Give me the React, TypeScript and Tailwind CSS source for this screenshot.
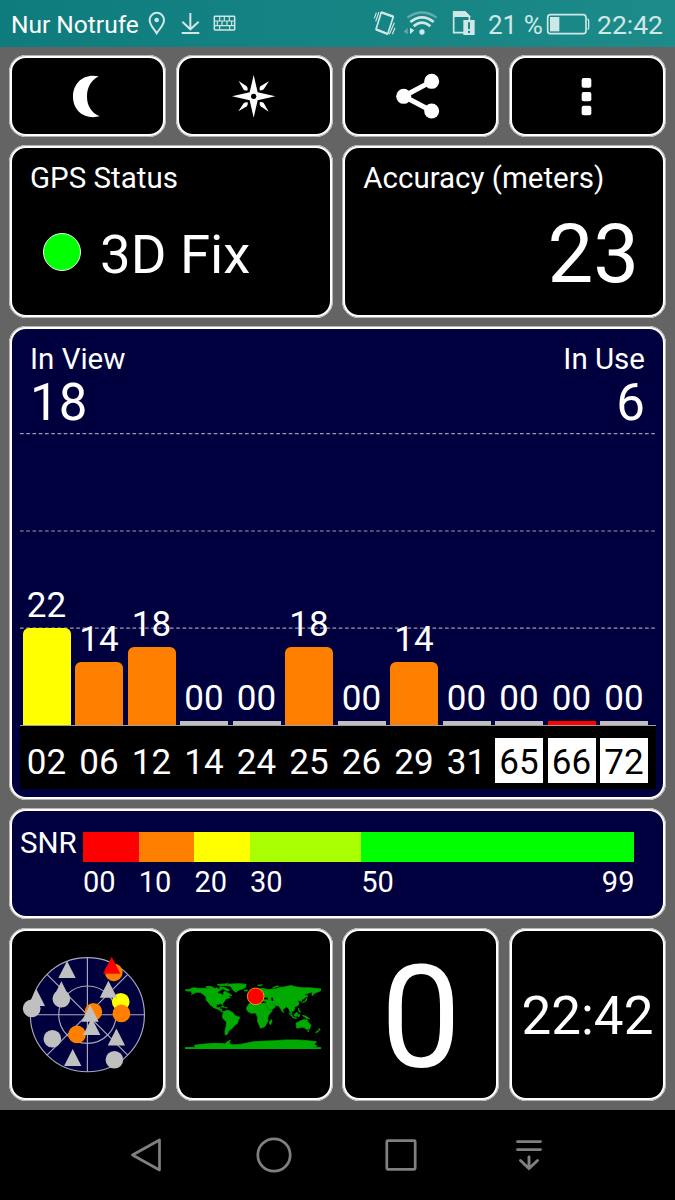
import React from 'react';

interface Satellite {
  id: string;
  snr: string;
  height: number;
  color: string;
  glonass?: boolean;
}

const satellites: Satellite[] = [
  { id: '02', snr: '22', height: 97, color: 'bg-[#ffff00]' },
  { id: '06', snr: '14', height: 63, color: 'bg-[#ff8000]' },
  { id: '12', snr: '18', height: 78, color: 'bg-[#ff8000]' },
  { id: '14', snr: '00', height: 4, color: 'bg-[#c0c0c0]' },
  { id: '24', snr: '00', height: 4, color: 'bg-[#c0c0c0]' },
  { id: '25', snr: '18', height: 78, color: 'bg-[#ff8000]' },
  { id: '26', snr: '00', height: 4, color: 'bg-[#c0c0c0]' },
  { id: '29', snr: '14', height: 63, color: 'bg-[#ff8000]' },
  { id: '31', snr: '00', height: 4, color: 'bg-[#c0c0c0]' },
  { id: '65', snr: '00', height: 4, color: 'bg-[#c0c0c0]', glonass: true },
  { id: '66', snr: '00', height: 4, color: 'bg-[#ff0000]', glonass: true },
  { id: '72', snr: '00', height: 4, color: 'bg-[#c0c0c0]', glonass: true },
];

const snrScale = [
  { from: '00', span: 'w-[55.7px]', color: 'bg-[#ff0000]' },
  { from: '10', span: 'w-[55.7px]', color: 'bg-[#ff8000]' },
  { from: '20', span: 'w-[55.7px]', color: 'bg-[#ffff00]' },
  { from: '30', span: 'w-[111.2px]', color: 'bg-[#aaff00]' },
  { from: '50', span: 'w-[273.2px]', color: 'bg-[#00ff00]' },
];

// GPS satellites are circles, GLONASS ones are triangles
const skyCircles: [number, number, string][] = [
  [169, 221, '#c0c0c0'],
  [142, 341, '#c0c0c0'],
  [328, 404, '#c0c0c0'],
  [326, 142, '#ff8000'],
  [347, 230, '#ffff00'],
  [349, 265, '#ff8000'],
  [265, 260, '#ff8000'],
  [216, 328, '#ff8000'],
];

const skyTriangles: [number, number, string][] = [
  [186, 108, '#c0c0c0'],
  [320, 95, '#ff0000'],
  [94, 192, '#c0c0c0'],
  [169, 169, '#c0c0c0'],
  [310, 167, '#c0c0c0'],
  [260, 279, '#c0c0c0'],
  [255, 239, '#c0c0c0'],
  [334, 310, '#c0c0c0'],
  [203, 372, '#c0c0c0'],
];

// Coastlines as longitude / negative latitude
const land = [
  '-180,-66 -168,-68 -162,-71 -156,-72 -140,-70 -128,-71 -115,-69 -105,-69 -95,-72 -93,-69 -84,-68 -81,-69 -87,-65 -94,-61 -92,-57 -82,-55 -80,-51 -78,-55 -77,-62 -71,-61 -66,-58 -60,-55 -56,-52 -66,-50 -60,-46 -70,-43 -74,-40 -76,-35 -81,-31 -80,-25 -84,-30 -90,-29 -97,-27 -97,-20 -91,-19 -87,-21 -88,-16 -83,-15 -83,-10 -77,-8 -83,-8 -88,-13 -95,-16 -105,-20 -109,-26 -114,-31 -110,-23 -117,-32 -124,-40 -124,-48 -132,-55 -140,-60 -150,-60 -164,-54 -158,-58 -165,-61 -162,-65 -172,-63',
  '-77,-8 -72,-12 -62,-11 -51,-4 -50,0 -44,3 -35,6 -39,14 -41,22 -48,27 -54,34 -58,38 -65,42 -66,47 -69,52 -74,52 -74,42 -71,30 -70,18 -77,12 -81,5 -80,-1',
  '-73,-78 -60,-82 -35,-83 -18,-81 -20,-73 -28,-69 -40,-65 -44,-60 -52,-65 -55,-70 -60,-76',
  '-125,-75 -115,-76 -105,-73 -102,-69 -118,-70',
  '-95,-81 -65,-83 -75,-78 -88,-77',
  '-88,-74 -75,-73 -62,-66 -68,-63 -78,-69 -88,-70',
  '-24,-66 -14,-66 -16,-63 -22,-64',
  '-9,-43 -2,-44 -4,-48 2,-51 8,-54 8,-57 12,-54 20,-55 28,-60 22,-63 25,-66 18,-61 12,-56 5,-60 12,-67 25,-71 40,-67 45,-68 60,-69 70,-73 82,-74 100,-78 115,-74 130,-72 150,-72 170,-70 180,-69 180,-65 172,-61 163,-58 157,-51 156,-58 162,-62 150,-59 136,-55 141,-49 135,-43 129,-41 129,-35 125,-38 118,-39 121,-32 120,-26 110,-21 109,-12 105,-9 100,-14 104,-2 98,-9 94,-18 88,-22 80,-15 78,-8 73,-17 68,-24 58,-26 48,-30 57,-25 59,-21 52,-16 44,-13 39,-21 34,-29 36,-36 27,-37 30,-41 23,-37 19,-42 13,-45 18,-40 12,-42 3,-42 -1,-37 -9,-37',
  '-6,-35 10,-37 20,-31 33,-31 37,-21 43,-12 51,-12 41,1 39,7 40,16 35,24 31,31 20,35 17,28 12,17 13,7 9,-1 8,-5 -5,-5 -12,-8 -17,-15 -16,-22 -10,-30',
  '44,17 49,12 50,16 47,25 44,24',
  '-5,-50 1,-51 -2,-56 -5,-58 -4,-54',
  '-10,-52 -6,-53 -7,-55 -10,-54',
  '114,22 122,17 129,14 137,12 136,16 142,11 146,19 153,27 150,37 142,38 136,34 130,32 116,35',
  '145,41 148,41 147,44 145,43',
  '174,36 178,38 175,41',
  '172,41 174,42 169,47 166,46',
  '95,-6 105,2 106,6 100,1',
  '105,6 115,8 115,9 105,7',
  '109,-2 117,-7 118,-2 115,4 110,2',
  '119,-1 124,-1 121,5 119,4',
  '131,1 141,3 150,10 142,9 135,4',
  '121,-18 122,-13 126,-7 123,-8 120,-14',
  '131,-33 136,-35 141,-38 142,-45 139,-38',
  '142,-54 143,-46 144,-50',
  '52,-71 60,-76 68,-77 58,-73',
  '12,-79 25,-80 18,-77',
  '80,-7 82,-7 81,-9',
  '-85,-22 -75,-20 -77,-22',
  '-73,-20 -68,-19 -72,-18',
  '-180,86 -153,86 -155,80 -130,77 -100,75 -75,76 -66,70 -60,66 -63,75 -55,79 -35,78 -15,74 0,71 30,69 60,68 85,66 120,66 145,68 168,71 162,78 170,82 158,86 180,86 180,90 -180,90',
];

interface PanelProps {
  className?: string;
  children: React.ReactNode;
}

const Panel: React.FC<PanelProps> = ({ className = '', children }) => (
  <div className={`rounded-[17px] border-[3px] border-white outline-1 -outline-offset-1 outline-[#b4b4b4] ${className}`}>
    {children}
  </div>
);

const StatusBar = () => (
  <div className="flex h-[47px] items-start bg-gradient-to-r from-[#0e7b7d] to-[#1d8b8a] pl-[11px] text-[#cfe7e6]">
    <span className="mt-[13px] w-[137px] whitespace-nowrap text-[24.500px] leading-none text-white">Nur Notrufe</span>
    <svg className="mt-[11px] h-6 w-[18px]" viewBox="444 33 54 72" fill="none" stroke="currentColor" strokeWidth="6">
      <path d="M470 100 C461 85 449 76 449 60 A21.500 21.500 0 0 1 492 60 C492 76 479 85 470 100Z" />
      <circle cx="470" cy="60" r="7" fill="currentColor" stroke="none" />
    </svg>
    <svg className="mt-[11px] ml-[15px] h-6 w-5" viewBox="543 33 60 72" fill="none" stroke="currentColor" strokeWidth="6">
      <path d="M571 39V88M547 65L571 88L596 65M545 99H598" />
    </svg>
    <svg className="mt-[11px] ml-[12px] h-6 w-[23px]" viewBox="639 33 69 72" fill="none" stroke="currentColor" strokeWidth="4.500">
      <rect x="643" y="49" width="61" height="41" rx="2" />
      <path d="M643 63H704M643 77H704M659 49V63M673 49V63M688 49V63M652 63V77M666 63V77M681 63V77M695 63V77M659 77V90M689 77V90" strokeWidth="3.500" />
    </svg>

    <svg className="mt-[10px] ml-[137px] h-[26px] w-[23px]" viewBox="114 30 69 78" fill="none" stroke="currentColor">
      <path d="M139 37L175 50L158 102L123 88Z" strokeWidth="5" strokeLinejoin="round" />
      <path d="M139 37L175 50M123 88L158 102" strokeWidth="7" />
      <path d="M118 55L124 38M122 64L132 36M163 103L178 68M172 103L180 83" strokeWidth="3.500" />
    </svg>
    <svg className="mt-[10px] ml-[7px] h-[26px] w-[35px]" viewBox="204 30 105 78" fill="none" stroke="currentColor">
      <path d="M217 53Q261 22 305 53" strokeWidth="7" opacity=".4" />
      <path d="M226 66Q261 38 296 66" strokeWidth="8" />
      <path d="M236 79Q261 57 286 79" strokeWidth="8" />
      <circle cx="261" cy="96" r="8" fill="currentColor" stroke="none" />
      <path d="M206 95L218 83V103Z" fill="currentColor" stroke="none" opacity=".4" />
      <path d="M225 83V103L238 91Z" fill="currentColor" stroke="none" />
    </svg>
    <svg className="mt-[10px] ml-[14px] h-[26px] w-[23px]" viewBox="351 30 69 78" fill="none" stroke="currentColor">
      <path d="M388 98H356V36H390L403 49V61" strokeWidth="5" />
      <path d="M356 36H390L403 49H356Z" fill="currentColor" strokeWidth="4" />
      <rect x="385" y="60" width="34" height="45" fill="currentColor" stroke="none" />
      <path d="M402 67V87M402 92V99" stroke="#198887" strokeWidth="6" />
    </svg>
    <span className="mt-[12px] ml-[13px] w-[58px] whitespace-nowrap text-[26px] leading-none">21 %</span>
    <svg className="mt-[12px] h-6 w-11" viewBox="633 36 132 72" fill="none" stroke="currentColor">
      <rect x="638" y="44" width="115" height="57" rx="9" strokeWidth="5" />
      <rect x="645" y="51" width="28" height="43" fill="currentColor" stroke="none" />
      <path d="M757 57Q761 57 761 63V83Q761 88 757 88" strokeWidth="4" />
    </svg>
    <span className="mt-[12px] ml-[7px] whitespace-nowrap text-[26.500px] leading-none">22:42</span>
  </div>
);

const Toolbar = () => (
  <div className="grid h-[82px] grid-cols-4 gap-[9.500px]">
    <Panel className="flex items-center justify-center bg-black">
      <svg className="size-[52px]" viewBox="187 210 156 156" fill="#fff">
        <path d="M297 229C253 219 220 248 220 290C220 332 255 360 300 349C274 337 262 316 262 290C262 264 273 242 297 229Z" />
      </svg>
    </Panel>
    <Panel className="flex items-center justify-center bg-black">
      <svg className="size-[52px]" viewBox="684 210 156 156" fill="#fff">
        <path d="M761 225L773 277L826 289L773 301L761 353L749 301L696 289L749 277Z" />
        <circle cx="761" cy="289" r="8" fill="#000" />
        {[0, 90, 180, 270].map((angle) => (
          <path
            key={angle}
            d="M716 243L740 259Q744 263 743 271Q737 273 731 269Z"
            transform={`rotate(${angle} 761 289)`}
          />
        ))}
      </svg>
    </Panel>
    <Panel className="flex items-center justify-center bg-black">
      <svg className="size-[52px]" viewBox="179 210 156 156" fill="#fff">
        <path d="M289 244L205 289L289 333" fill="none" stroke="#fff" strokeWidth="15" />
        <circle cx="205" cy="289" r="22.500" />
        <circle cx="289" cy="244" r="22.500" />
        <circle cx="289" cy="333" r="22.500" />
      </svg>
    </Panel>
    <Panel className="flex items-center justify-center bg-black">
      <svg className="size-[52px]" viewBox="679 210 156 156" fill="#fff">
        <rect x="741" y="234" width="29" height="29" rx="6" />
        <rect x="741" y="276" width="29" height="28" rx="6" />
        <rect x="741" y="317" width="29" height="29" rx="6" />
      </svg>
    </Panel>
  </div>
);

const SignalChart = () => (
  <Panel className="mt-2 h-[474px] bg-[#00003f]">
    <div className="flex justify-between px-[18px] pt-[16px]">
      <div>
        <div className="text-[29.500px] leading-none">In View</div>
        <div className="mt-[2.500px] text-[51px] leading-none">18</div>
      </div>
      <div className="text-right">
        <div className="text-[29.500px] leading-none">In Use</div>
        <div className="mt-[2.500px] text-[51px] leading-none">6</div>
      </div>
    </div>

    {/* Plot area */}
    <div className="relative mt-[5px] ml-[7.500px] h-[293px] w-[636px] border-b border-[#a0a0a0]">
      <svg className="absolute inset-0 h-full w-full" stroke="#9c9cb4" strokeWidth="1.200" strokeDasharray="3.650 2.600">
        <path d="M0 .7H635M0 98H635M0 195.200H635" />
      </svg>
      <div className="relative flex h-full items-end gap-[4.500px] pl-[3px]">
        {satellites.map((sat) => (
          <div key={sat.id} className="w-12 text-center">
            <div className="mb-[5px] text-[35px] leading-none">{sat.snr}</div>
            <div
              className={`${sat.color} ${sat.height > 4 ? 'rounded-t-[6px]' : ''}`}
              style={{ height: sat.height }}
            />
          </div>
        ))}
      </div>
    </div>

    {/* Satellite numbers */}
    <div className="ml-[7.500px] flex h-[63px] w-[636px] gap-[4.500px] bg-black pt-3 pl-[3px]">
      {satellites.map((sat) => (
        <div
          key={sat.id}
          className={`h-[45px] w-12 pt-[7px] text-center text-[35px] leading-none ${sat.glonass ? 'bg-white text-black' : ''}`}
        >
          {sat.id}
        </div>
      ))}
    </div>
  </Panel>
);

const SnrLegend = () => (
  <Panel className="mt-2 flex h-[111px] bg-[#00003f] pt-[18px] pl-[8px] text-[29.500px] leading-none">
    <div className="w-[63px]">SNR</div>
    <div className="pt-[3px]">
      <div className="flex h-[30px]">
        {snrScale.map((step) => (
          <div key={step.from} className={`${step.span} ${step.color}`} />
        ))}
      </div>
      <div className="mt-[6px] flex text-[29px] leading-none">
        {snrScale.map((step) => (
          <div key={step.from} className={`${step.span} flex justify-between`}>
            <span>{step.from}</span>
            {step.from === '50' && <span>99</span>}
          </div>
        ))}
      </div>
    </div>
  </Panel>
);

const SkyPlot = () => (
  <svg className="h-full w-full" viewBox="21 18 453 501">
    <g fill="none" stroke="#a8a8b8" strokeWidth="3.500">
      <circle cx="247" cy="269" r="171" fill="#00003f" />
      <circle cx="247" cy="269" r="86" />
      <path d="M76 269H418M247 98V440M126 148L368 390M368 148L126 390" />
    </g>
    {skyCircles.map(([x, y, fill], i) => (
      <circle key={i} cx={x} cy={y} r="26.500" fill={fill} />
    ))}
    {skyTriangles.map(([x, y, fill], i) => (
      <path key={i} d={`M${x} ${y}l26 51h-52Z`} fill={fill} />
    ))}
    <circle cx="80" cy="250" r="26.500" fill="#c0c0c0" />
  </svg>
);

const WorldMap = () => (
  <svg className="mr-[2px] h-[68px] w-[136px]" viewBox="-180 -90 360 180">
    <g fill="#00aa00" stroke="#00aa00" strokeWidth="2">
      {land.map((points, i) => (
        <polygon key={i} points={points} />
      ))}
    </g>
    <g fill="#000">
      <path d="M28 -42L40 -41L38 -46L30 -46Z" />
      <path d="M48 -46L53 -45L54 -37L49 -38Z" />
    </g>
    <circle cx="7" cy="-49.500" r="22" fill="#ff0000" stroke="#ffb000" strokeWidth="2.200" />
  </svg>
);

const NavBar = () => (
  <div className="flex h-[90px] items-center bg-black pl-[82px]">
    <div className="flex w-[127.700px] justify-center">
      <svg className="size-9" viewBox="0 0 36 36" fill="none" stroke="#808080" strokeWidth="2.700" strokeLinejoin="round">
        <path d="M4.500 18L31.500 3V33Z" />
      </svg>
    </div>
    <div className="flex w-[127.700px] justify-center">
      <svg className="size-9" viewBox="0 0 36 36" fill="none" stroke="#808080" strokeWidth="2.700">
        <circle cx="18" cy="18" r="16.200" />
      </svg>
    </div>
    <div className="flex w-[127.700px] justify-center">
      <svg className="size-9" viewBox="0 0 36 36" fill="none" stroke="#808080" strokeWidth="2.700">
        <rect x="3.800" y="3.700" width="28.400" height="28.600" rx="1" />
      </svg>
    </div>
    <div className="flex w-[127.700px] justify-center">
      <svg className="size-9" viewBox="0 0 36 36" fill="none" stroke="#808080" strokeWidth="2.900" strokeLinecap="round">
        <path d="M6.500 4.600H29.500M6.500 12.600H29.500M18 20V31.500M9.500 23.500L18 31.500L26.500 23.500" />
      </svg>
    </div>
  </div>
);

export default function App() {
  return (
    <div className="h-[1200px] w-[675px] overflow-hidden bg-[#646464] font-['Roboto',sans-serif] text-white">
      <StatusBar />
      <div className="h-[1063px] px-[9px] pt-2">
        <Toolbar />

        <div className="mt-2 grid h-[173px] grid-cols-2 gap-[9.500px]">
          <Panel className="bg-black pt-[16px] pl-[18px]">
            <div className="text-[29.500px] leading-none">GPS Status</div>
            <div className="mt-[33px] flex items-start">
              <div className="mt-[6px] ml-[13px] size-[38px] rounded-full border border-[#e8ffe8] bg-[#00ff00]" />
              <div className="ml-[19px] text-[54.500px] leading-none">3D Fix</div>
            </div>
          </Panel>
          <Panel className="bg-black pt-[16px] pl-[18px]">
            <div className="text-[29.500px] leading-none">Accuracy (meters)</div>
            <div className="mt-[20px] pr-[24px] text-right text-[81.500px] leading-none">23</div>
          </Panel>
        </div>

        <SignalChart />
        <SnrLegend />

        <div className="mt-[9px] grid h-[173px] grid-cols-4 gap-[9.500px]">
          <Panel className="bg-black">
            <SkyPlot />
          </Panel>
          <Panel className="flex items-center justify-center bg-black">
            <WorldMap />
          </Panel>
          <Panel className="flex justify-center bg-black pt-[16px] text-[143px] leading-none">0</Panel>
          <Panel className="flex justify-center bg-black pt-[59px] text-[53px] leading-none">22:42</Panel>
        </div>
      </div>
      <NavBar />
    </div>
  );
}
